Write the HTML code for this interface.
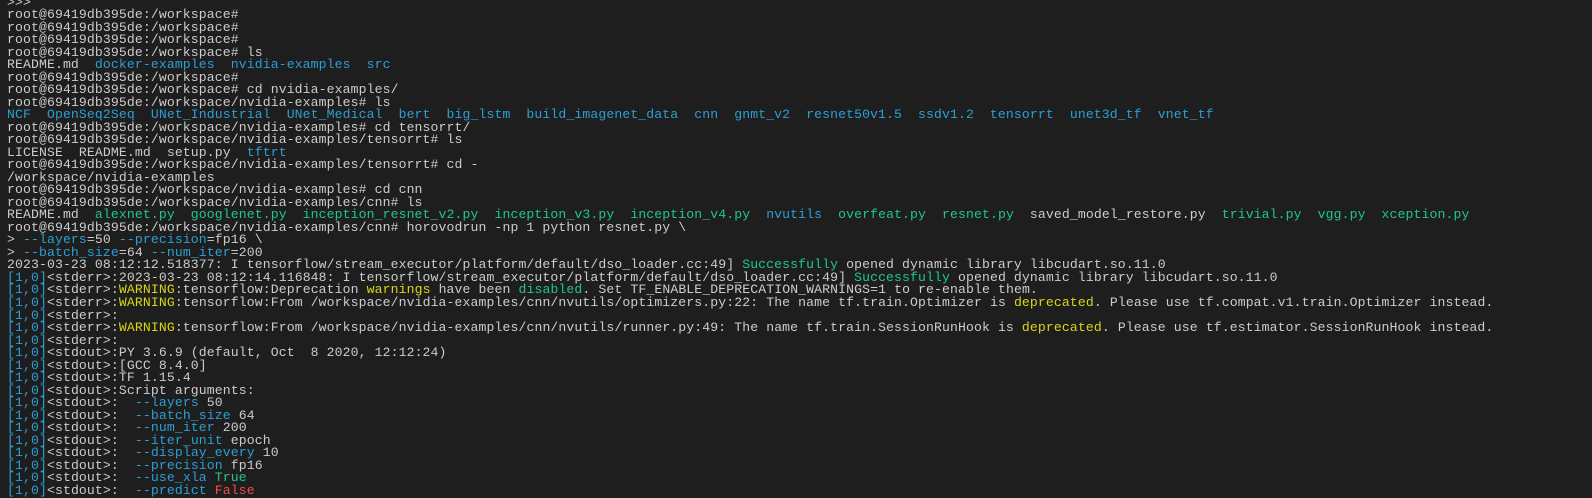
<!DOCTYPE html>
<html><head><meta charset="utf-8"><style>
html,body{margin:0;padding:0;background:#1e1e1e;width:1592px;height:482px;overflow:hidden}
#t{position:absolute;left:7px;top:-3.4px;font-family:"Liberation Mono",monospace;font-size:13.13px;letter-spacing:0.115px;color:#cccccc}
#t div{height:12.52px;line-height:12.52px;white-space:pre}
.b{color:#2b9fd6}.g{color:#1fc886}.y{color:#d7d715}.r{color:#f14c4c}
</style></head><body><div id="t">
<div>&gt;&gt;&gt;</div>
<div>root@69419db395de:/workspace#</div>
<div>root@69419db395de:/workspace#</div>
<div>root@69419db395de:/workspace#</div>
<div>root@69419db395de:/workspace# ls</div>
<div>README.md  <span class="b">docker-examples</span>  <span class="b">nvidia-examples</span>  <span class="b">src</span></div>
<div>root@69419db395de:/workspace#</div>
<div>root@69419db395de:/workspace# cd nvidia-examples/</div>
<div>root@69419db395de:/workspace/nvidia-examples# ls</div>
<div><span class="b">NCF  OpenSeq2Seq  UNet_Industrial  UNet_Medical  bert  big_lstm  build_imagenet_data  cnn  gnmt_v2  resnet50v1.5  ssdv1.2  tensorrt  unet3d_tf  vnet_tf</span></div>
<div>root@69419db395de:/workspace/nvidia-examples# cd tensorrt/</div>
<div>root@69419db395de:/workspace/nvidia-examples/tensorrt# ls</div>
<div>LICENSE  README.md  setup.py  <span class="b">tftrt</span></div>
<div>root@69419db395de:/workspace/nvidia-examples/tensorrt# cd -</div>
<div>/workspace/nvidia-examples</div>
<div>root@69419db395de:/workspace/nvidia-examples# cd cnn</div>
<div>root@69419db395de:/workspace/nvidia-examples/cnn# ls</div>
<div>README.md  <span class="g">alexnet.py  googlenet.py  inception_resnet_v2.py  inception_v3.py  inception_v4.py</span>  <span class="b">nvutils</span>  <span class="g">overfeat.py  resnet.py</span>  saved_model_restore.py  <span class="g">trivial.py  vgg.py  xception.py</span></div>
<div>root@69419db395de:/workspace/nvidia-examples/cnn# horovodrun -np 1 python resnet.py \</div>
<div>&gt; <span class="b">--layers</span>=50 <span class="b">--precision</span>=fp16 \</div>
<div>&gt; <span class="b">--batch_size</span>=64 <span class="b">--num_iter</span>=200</div>
<div>2023-03-23 08:12:12.518377: I tensorflow/stream_executor/platform/default/dso_loader.cc:49] <span class="g">Successfully</span> opened dynamic library libcudart.so.11.0</div>
<div><span class="b">[1,0]</span>&lt;stderr&gt;:2023-03-23 08:12:14.116848: I tensorflow/stream_executor/platform/default/dso_loader.cc:49] <span class="g">Successfully</span> opened dynamic library libcudart.so.11.0</div>
<div><span class="b">[1,0]</span>&lt;stderr&gt;:<span class="y">WARNING</span>:tensorflow:Deprecation <span class="y">warnings</span> have been <span class="g">disabled</span>. Set TF_ENABLE_DEPRECATION_WARNINGS=1 to re-enable them.</div>
<div><span class="b">[1,0]</span>&lt;stderr&gt;:<span class="y">WARNING</span>:tensorflow:From /workspace/nvidia-examples/cnn/nvutils/optimizers.py:22: The name tf.train.Optimizer is <span class="y">deprecated</span>. Please use tf.compat.v1.train.Optimizer instead.</div>
<div><span class="b">[1,0]</span>&lt;stderr&gt;:</div>
<div><span class="b">[1,0]</span>&lt;stderr&gt;:<span class="y">WARNING</span>:tensorflow:From /workspace/nvidia-examples/cnn/nvutils/runner.py:49: The name tf.train.SessionRunHook is <span class="y">deprecated</span>. Please use tf.estimator.SessionRunHook instead.</div>
<div><span class="b">[1,0]</span>&lt;stderr&gt;:</div>
<div><span class="b">[1,0]</span>&lt;stdout&gt;:PY 3.6.9 (default, Oct  8 2020, 12:12:24)</div>
<div><span class="b">[1,0]</span>&lt;stdout&gt;:[GCC 8.4.0]</div>
<div><span class="b">[1,0]</span>&lt;stdout&gt;:TF 1.15.4</div>
<div><span class="b">[1,0]</span>&lt;stdout&gt;:Script arguments:</div>
<div><span class="b">[1,0]</span>&lt;stdout&gt;:  <span class="b">--layers</span> 50</div>
<div><span class="b">[1,0]</span>&lt;stdout&gt;:  <span class="b">--batch_size</span> 64</div>
<div><span class="b">[1,0]</span>&lt;stdout&gt;:  <span class="b">--num_iter</span> 200</div>
<div><span class="b">[1,0]</span>&lt;stdout&gt;:  <span class="b">--iter_unit</span> epoch</div>
<div><span class="b">[1,0]</span>&lt;stdout&gt;:  <span class="b">--display_every</span> 10</div>
<div><span class="b">[1,0]</span>&lt;stdout&gt;:  <span class="b">--precision</span> fp16</div>
<div><span class="b">[1,0]</span>&lt;stdout&gt;:  <span class="b">--use_xla</span> <span class="g">True</span></div>
<div><span class="b">[1,0]</span>&lt;stdout&gt;:  <span class="b">--predict</span> <span class="r">False</span></div>
</div></body></html>
